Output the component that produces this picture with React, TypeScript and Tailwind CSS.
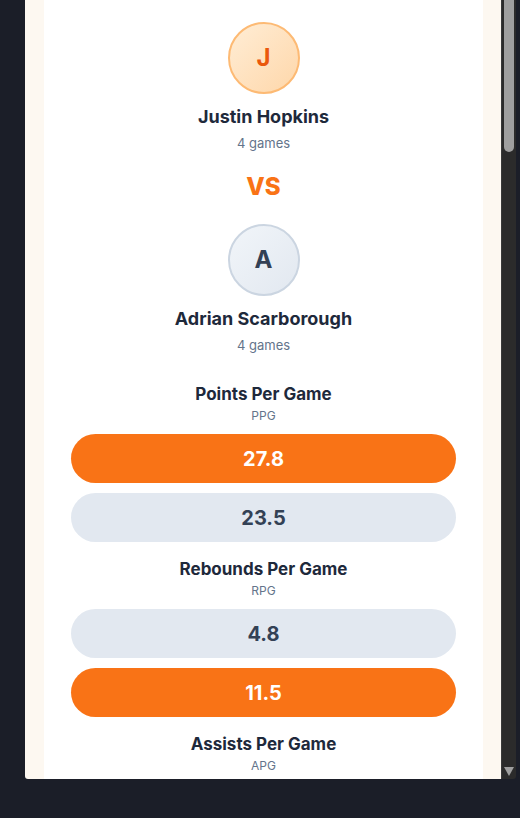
import React from 'react';

type Stat = { title: string; abbr: string; a?: string; b?: string; winner?: 'a' | 'b' };

const stats: Stat[] = [
  { title: 'Points Per Game', abbr: 'PPG', a: '27.8', b: '23.5', winner: 'a' },
  { title: 'Rebounds Per Game', abbr: 'RPG', a: '4.8', b: '11.5', winner: 'b' },
  { title: 'Assists Per Game', abbr: 'APG' },
];

const Player = ({ initial, name, games, hot }: { initial: string; name: string; games: number; hot?: boolean }) => (
  <div className="flex flex-col items-center">
    <div
      className={
        hot
          ? 'w-[72px] h-[72px] rounded-full border-2 border-[#fdba74] bg-gradient-to-br from-[#ffedd5] to-[#fed7aa] flex items-center justify-center text-[24px] font-bold text-[#ea580c]'
          : 'w-[72px] h-[72px] rounded-full border-2 border-[#cbd5e1] bg-gradient-to-br from-[#f1f5f9] to-[#e2e8f0] flex items-center justify-center text-[24px] font-bold text-[#334155]'
      }
    >
      {initial}
    </div>
    <div className="mt-[11px] text-[18px] leading-6 font-bold text-[#1e293b]">{name}</div>
    <div className="mt-[4px] text-[13px] leading-5 text-[#64748b]">{games} games</div>
  </div>
);

const Bar = ({ value, win }: { value: string; win: boolean }) => (
  <div
    className={
      win
        ? 'h-[49px] rounded-full bg-[#f97316] flex items-center justify-center text-[20px] font-bold text-white'
        : 'h-[49px] rounded-full bg-[#e2e8f0] flex items-center justify-center text-[20px] font-bold text-[#334155]'
    }
  >
    {value}
  </div>
);

export default function App() {
  return (
    <div className="h-[818px] bg-[#1b1e28] overflow-hidden" style={{ fontFamily: 'Inter, "Noto Sans", sans-serif' }}>
      <div className="ml-[25px] w-[491px] h-[779px] rounded-b-[3px] overflow-hidden flex">
        <div className="w-[476px] bg-[#fdf8f1] pl-[19px] pr-[18px]">
          <div className="bg-white h-full px-[27px] pt-[22px]">
            <Player initial="J" name="Justin Hopkins" games={4} hot />
            <div className="mt-[18px] text-center text-[24px] leading-8 font-extrabold text-[#f97316]">VS</div>
            <div className="mt-[21px]">
              <Player initial="A" name="Adrian Scarborough" games={4} />
            </div>
            <div className="mt-[27px] flex flex-col gap-[15px]">
              {stats.map((s) => (
                <div key={s.abbr} className="flex flex-col">
                  <div className="text-center text-[17px] leading-6 font-bold text-[#1e293b]">{s.title}</div>
                  <div className="mt-[2px] text-center text-[12px] leading-4 text-[#64748b]">{s.abbr}</div>
                  {s.a && s.b && (
                    <div className="mt-[10px] flex flex-col gap-[10px]">
                      <Bar value={s.a} win={s.winner === 'a'} />
                      <Bar value={s.b} win={s.winner === 'b'} />
                    </div>
                  )}
                </div>
              ))}
            </div>
          </div>
        </div>
        <div className="w-[15px] bg-[#2b2b2b] border-l border-[#3a3a3a] flex flex-col items-center">
          <div className="w-[10px] h-[152px] rounded-b-full bg-[#9f9f9f]" />
          <div className="flex-1" />
          <div className="mb-[3px] w-0 h-0 border-l-[5px] border-r-[5px] border-t-[9px] border-l-transparent border-r-transparent border-t-[#9f9f9f]" />
        </div>
      </div>
    </div>
  );
}
